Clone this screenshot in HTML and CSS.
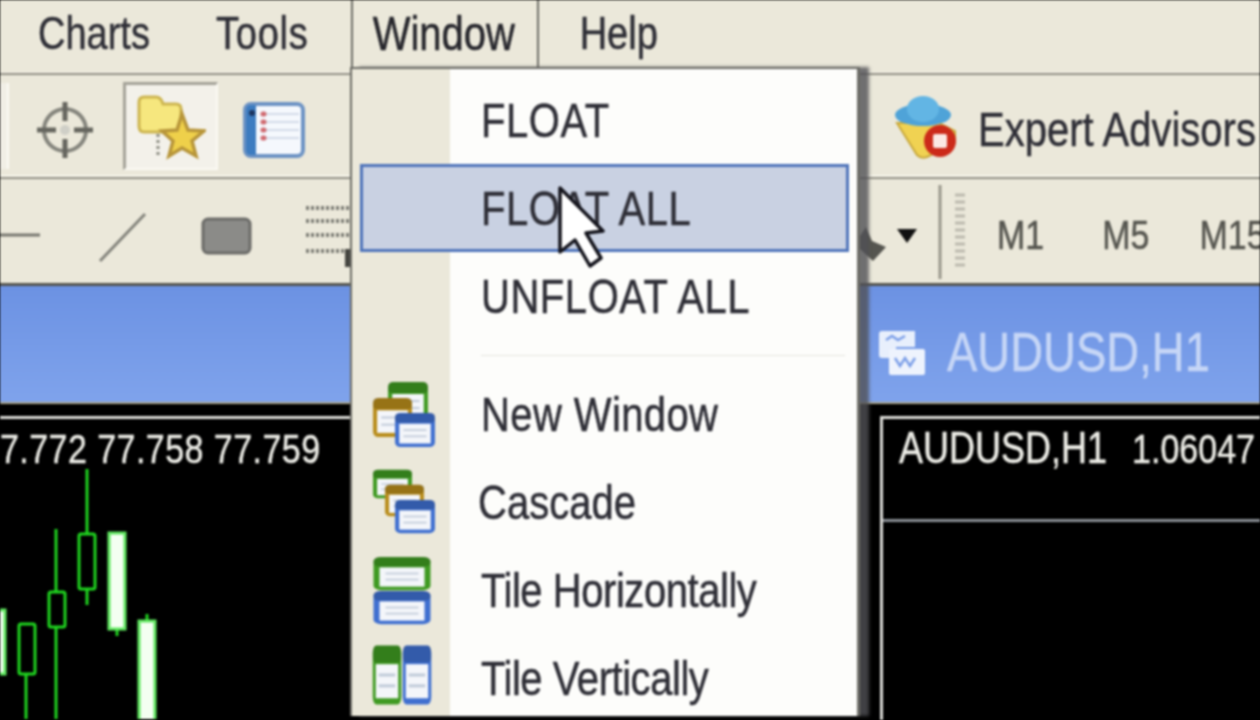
FILE: index.html
```html
<!DOCTYPE html>
<html lang="en">
<head>
  <meta charset="UTF-8" />
  <title>Window menu</title>
  <link rel="stylesheet" href="styles.css">
</head>
<body>
  <svg class="defs" width="0" height="0">
    <symbol id="win" viewBox="0 0 40 40" preserveAspectRatio="none">
      <rect x="1" y="1" width="38" height="38" rx="5" fill="currentColor" />
      <rect x="1" y="1" width="38" height="11" rx="4" fill="#000" opacity="0.18" />
      <rect x="5" y="13" width="30" height="22" fill="#f4f6fa" />
      <rect x="9" y="19" width="22" height="2" fill="#c2ccda" />
      <rect x="9" y="26" width="22" height="2" fill="#c2ccda" />
    </symbol>
  </svg>

  <div class="app">
    <header class="menubar">
      <span class="mi txt charts">Charts</span>
      <span class="mi txt tools">Tools</span>
      <div class="mi-open"><span class="txt">Window</span></div>
      <span class="mi txt help">Help</span>
    </header>

    <div class="toolbar tb1">
      <div class="tb-left">
        <div class="btn-edge"></div>
        <svg class="ic-cross" width="58" height="58" viewBox="0 0 58 58">
          <circle cx="29" cy="29" r="21" fill="none" stroke="#85857d" stroke-width="4" />
          <path d="M29 1V20M29 38V57M1 29H20M38 29H57" stroke="#66665f" stroke-width="5" />
          <circle cx="29" cy="29" r="5" fill="#cfcfc7" />
        </svg>
        <div class="btn-on">
          <svg width="70" height="66" viewBox="0 0 70 66">
            <path d="M22 40V62" stroke="#8a8a80" stroke-width="3" stroke-dasharray="3 3" />
            <path d="M3 8Q3 3 8 3H20Q25 3 27 10H40Q45 10 45 15V32Q45 38 40 38H8Q3 38 3 32Z" fill="#f6e77e" stroke="#cdb550" stroke-width="3" />
            <path d="M46 20L52 36L68 37L56 47L60 62L46 54L33 62L37 47L26 37L41 36Z" fill="#efd04a" stroke="#b8963a" stroke-width="3.5" />
          </svg>
        </div>
        <svg class="ic-list" width="62" height="56" viewBox="0 0 62 56">
          <rect x="2" y="2" width="58" height="52" rx="6" fill="#f5f8fd" stroke="#6d93c4" stroke-width="4" />
          <path d="M3 8Q3 3 8 3H13V53H8Q3 53 3 48Z" fill="#3d7cc0" />
          <path d="M20 12H56M20 20H56M20 28H56M20 36H56" stroke="#d3dbe8" stroke-width="2" />
          <path d="M20 12h1M20 20h1M20 28h1M20 36h1" stroke="#d06a70" stroke-width="5" stroke-linecap="round" />
          <circle cx="9" cy="11" r="3" fill="#1c3560" />
        </svg>
      </div>
      <div class="tb-right">
        <svg class="ic-expert" width="64" height="64" viewBox="0 0 64 64">
          <path d="M4 28L46 28L62 36V48L34 62Q28 64 24 60Z" fill="#f0d252" stroke="#c9a93c" stroke-width="2" />
          <ellipse cx="30" cy="20" rx="28" ry="11" fill="#4fa3d8" />
          <ellipse cx="30" cy="14" rx="16" ry="13" fill="#62b5e4" />
          <circle cx="47" cy="46" r="16" fill="#cc2a1a" />
          <rect x="40" y="39" width="14" height="14" rx="2" fill="#fbe9e4" />
        </svg>
        <span class="txt ea">Expert Advisors</span>
      </div>
    </div>

    <div class="toolbar tb2">
      <div class="tb-left">
        <svg width="350" height="100" viewBox="0 0 350 100">
          <path d="M0 54H40" stroke="#77776f" stroke-width="3" />
          <path d="M100 80L145 33" stroke="#85857d" stroke-width="3" />
          <rect x="203" y="38" width="47" height="34" rx="5" fill="#8b8b88" stroke="#6b6b68" stroke-width="3" />
          <path d="M306 27H350M306 40H350M306 54H350M306 70H344" stroke="#7d7d75" stroke-width="4" stroke-dasharray="3 2" />
          <rect x="345" y="68" width="5" height="18" fill="#44443f" />
        </svg>
      </div>
      <div class="tb-right tf-group">
        <svg width="110" height="100" viewBox="860 180 110 100">
          <path d="M860 235L866 226L872 240L886 246L873 260L860 248Z" fill="#55554f" />
          <path d="M897 228H917L907 242Z" fill="#111" />
          <path d="M940 184V278" stroke="#99978b" stroke-width="3" />
          <path d="M955 194H965M955 201H965M955 208H965M955 215H965M955 222H965M955 229H965M955 236H965M955 243H965M955 250H965M955 257H965M955 264H965" stroke="#bcbaae" stroke-width="3" />
        </svg>
        <span class="txt tf m1">M1</span>
        <span class="txt tf m5">M5</span>
        <span class="txt tf">M15</span>
      </div>
    </div>

    <div class="titlebar">
      <svg width="48" height="46" viewBox="0 0 48 46">
        <path d="M1 4Q1 1 4 1H37V17H18V28H4Q1 28 1 25Z" fill="#e8effc" />
        <rect x="11" y="19" width="36" height="26" rx="2" fill="#eef3fd" />
        <path d="M8 10L14 6L20 10L27 6M17 28L22 36L27 28L32 36L37 28" stroke="#7c9fe8" stroke-width="2.5" fill="none" />
      </svg>
      <span class="txt title-text">AUDUSD,H1</span>
    </div>

    <div class="panes">
      <section class="pane pane-l">
        <div class="chart">
          <div class="quote"><span class="txt">7.772 77.758 77.759</span></div>
          <svg class="candles" width="348" height="260" viewBox="0 460 348 260">
            <g stroke="#1fd41f" stroke-width="3" fill="none">
              <path d="M26 675V720M56 530V593M56 628V720M87 470V535M87 590V606M117 630V637M147 615V622" />
              <rect x="19" y="625" width="16" height="50" rx="2" />
              <rect x="49" y="593" width="16" height="35" rx="2" />
              <rect x="79" y="535" width="16" height="55" rx="2" />
            </g>
            <g fill="#f4fff2" stroke="#5fe85f" stroke-width="3">
              <rect x="-5" y="611" width="10" height="64" />
              <rect x="109" y="534" width="16" height="96" />
              <rect x="139" y="622" width="16" height="100" />
            </g>
          </svg>
        </div>
      </section>
      <section class="pane pane-r">
        <div class="chart">
          <div class="quote q-r"><span class="txt">AUDUSD,H1</span><span class="txt q-price">1.06047</span></div>
        </div>
      </section>
    </div>

    <nav class="menu">
      <div class="row"><span class="slot"></span><span class="txt caps">FLOAT</span></div>
      <div class="row active"><span class="slot"></span><span class="txt caps">FLOAT ALL</span></div>
      <div class="row"><span class="slot"></span><span class="txt caps">UNFLOAT ALL</span></div>
      <div class="sep"></div>
      <div class="row">
        <span class="slot">
          <svg width="66" height="68" viewBox="0 0 66 68">
            <use href="#win" x="16" y="1" width="42" height="40" color="#3f9a22" />
            <use href="#win" x="1" y="17" width="41" height="41" color="#b98d1c" />
            <use href="#win" x="23" y="32" width="42" height="36" color="#3f6fd0" />
          </svg>
        </span>
        <span class="txt new-win">New Window</span>
      </div>
      <div class="row">
        <span class="slot">
          <svg width="66" height="68" viewBox="0 0 66 68">
            <use href="#win" x="1" y="1" width="41" height="30" color="#3f9a22" />
            <use href="#win" x="13" y="16" width="41" height="33" color="#b98d1c" />
            <use href="#win" x="23" y="31" width="42" height="35" color="#3f6fd0" />
          </svg>
        </span>
        <span class="txt cascade">Cascade</span>
      </div>
      <div class="row">
        <span class="slot">
          <svg width="66" height="70" viewBox="0 0 66 70">
            <use href="#win" x="1" y="1" width="60" height="35" color="#3f9a22" />
            <use href="#win" x="1" y="35" width="60" height="35" color="#3f6fd0" />
          </svg>
        </span>
        <span class="txt tile">Tile Horizontally</span>
      </div>
      <div class="row">
        <span class="slot">
          <svg width="66" height="70" viewBox="0 0 66 70">
            <use href="#win" x="1" y="1" width="30" height="62" color="#3f9a22" />
            <use href="#win" x="31" y="1" width="30" height="62" color="#3f6fd0" />
          </svg>
        </span>
        <span class="txt tile">Tile Vertically</span>
      </div>
    </nav>

    <svg class="cursor" width="50" height="84" viewBox="558 185 50 84">
      <path d="M560 188L603 231L586 233L601 258L590 266L575 240L560 252Z" fill="#fff" stroke="#14141c" stroke-width="3.5" stroke-linejoin="round" />
    </svg>
  </div>
</body>
</html>
```
FILE: styles.css
```css
html, body {
  margin: 0;
  background: #000;
}
.defs {
  position: absolute;
}
.app {
  position: relative;
  width: 1260px;
  height: 720px;
  overflow: hidden;
  background: #ebe8da;
  font-family: "Liberation Sans", Arial, sans-serif;
  color: #2e2e36;
  filter: blur(0.8px);
}
/* video stretched the text vertically */
.txt {
  display: inline-block;
  transform: scaleY(1.22);
  white-space: nowrap;
  -webkit-text-stroke: 0.4px currentColor;
}

/* menu bar */
.menubar {
  display: flex;
  align-items: flex-start;
  box-sizing: border-box;
  height: 75px;
  padding-left: 38px;
  border-bottom: 2px solid #8f8d82;
  box-shadow: inset 0 -1px 0 #f8f6ec;
  font-size: 38px;
}
.mi {
  margin-top: 11px;
  line-height: 44px;
}
.tools {
  margin-left: 66px;
  letter-spacing: 0.8px;
}
.mi-open {
  box-sizing: border-box;
  width: 188px;
  height: 68px;
  margin-left: 42px;
  padding: 11px 0 0 20px;
  border-left: 2px solid #6e6e68;
  border-right: 2px solid #6e6e68;
  font-size: 40px;
  line-height: 44px;
  color: #26262c;
}
.help {
  margin-left: 41px;
}

/* toolbars */
.toolbar {
  display: flex;
  align-items: center;
  box-sizing: border-box;
}
.tb1 {
  height: 104px;
  border-bottom: 2px solid #8f8d82;
  box-shadow: inset 0 -2px 0 #f8f6ec;
}
.tb2 {
  height: 107px;
  border-bottom: 3px solid #55554f;
}
.tb-left {
  display: flex;
  align-items: center;
  flex: none;
  width: 350px;
}
.btn-edge {
  width: 7px;
  height: 86px;
  background: #f1efe6;
  border-right: 2px solid #fbfaf4;
}
.ic-cross {
  margin: 8px 0 0 27px;
}
.btn-on {
  display: flex;
  align-items: center;
  justify-content: center;
  box-sizing: border-box;
  width: 95px;
  height: 88px;
  margin-left: 29px;
  background: #f3f1ea;
  border-top: 3px solid #a5a399;
  border-left: 3px solid #a5a399;
  border-right: 2px solid #fbfaf4;
  border-bottom: 2px solid #fbfaf4;
}
.ic-list {
  margin: 8px 0 0 25px;
}
.tb-right {
  display: flex;
  align-items: center;
  margin-left: 543px;
}
.ic-expert {
  margin-top: 2px;
}
.ea {
  margin: 6px 0 0 21px;
  font-size: 40px;
}
.tf-group {
  margin-left: 510px;
}
.tf {
  margin-top: 6px;
  margin-right: 58px;
  font-size: 34px;
  color: #55554f;
}
.m1 {
  margin-left: 27px;
}
.m5 {
  margin-right: 50px;
}

/* chart window title */
.titlebar {
  display: flex;
  align-items: center;
  box-sizing: border-box;
  height: 118px;
  padding: 17px 0 0 878px;
  background: linear-gradient(#6c92e3, #7fa3ec);
  border-bottom: 2px solid #a8a48e;
}
.title-text {
  margin-left: 21px;
  font-size: 45.5px;
  color: #c6d6f6;
}

/* charts */
.panes {
  display: flex;
  height: 316px;
  background: #000;
}
.pane {
  box-sizing: border-box;
  padding-top: 12px;
}
.pane-l {
  width: 858px;
}
.pane-r {
  flex: 1;
  padding-left: 22px;
}
.chart {
  height: 100%;
  border-top: 3px solid #dcdcd8;
}
.pane-r .chart {
  border-left: 3px solid #dcdcd8;
}
.quote {
  box-sizing: border-box;
  height: 47px;
  padding-top: 9px;
  font-size: 34px;
  line-height: 40px;
  letter-spacing: 0.45px;
  color: #ecece6;
}
.q-r {
  height: 103px;
  padding-left: 16px;
  border-bottom: 3px solid #8a8f95;
  font-size: 36px;
  letter-spacing: 0;
}
.q-price {
  margin-left: 25px;
  font-size: 34px;
}
.candles {
  display: block;
  margin-top: -7px;
}

/* open Window menu */
.menu {
  position: absolute;
  top: 67px;
  left: 350px;
  box-sizing: border-box;
  width: 510px;
  height: 649px;
  padding-top: 7px;
  overflow: hidden;
  background: linear-gradient(to right, #ebe8da 98px, #fdfdfb 98px);
  border: solid #6c6c66;
  border-width: 2px 3px 0 2px;
  font-size: 40px;
  box-shadow: 9px 0 3px rgb(80 80 85 / 0.8);
}
.row {
  display: grid;
  grid-template-columns: 121px 1fr;
  align-items: center;
  box-sizing: border-box;
  height: 88px;
  margin: 0 8px;
}
.slot {
  display: flex;
  padding-left: 11px;
}
.row .txt {
  justify-self: start;
}
.row.active {
  background: #c9d1e2;
  outline: 3px solid #4f74ba;
  outline-offset: -3px;
}
.caps {
  letter-spacing: 0.55px;
}
.new-win {
  letter-spacing: 0.4px;
}
.cascade {
  margin-left: -3px;
}
.tile {
  letter-spacing: -0.45px;
}
.sep {
  height: 1px;
  margin: 15px 12px 14px 129px;
  background: #e4e4de;
}
.cursor {
  position: absolute;
  top: 185px;
  left: 558px;
}
```
